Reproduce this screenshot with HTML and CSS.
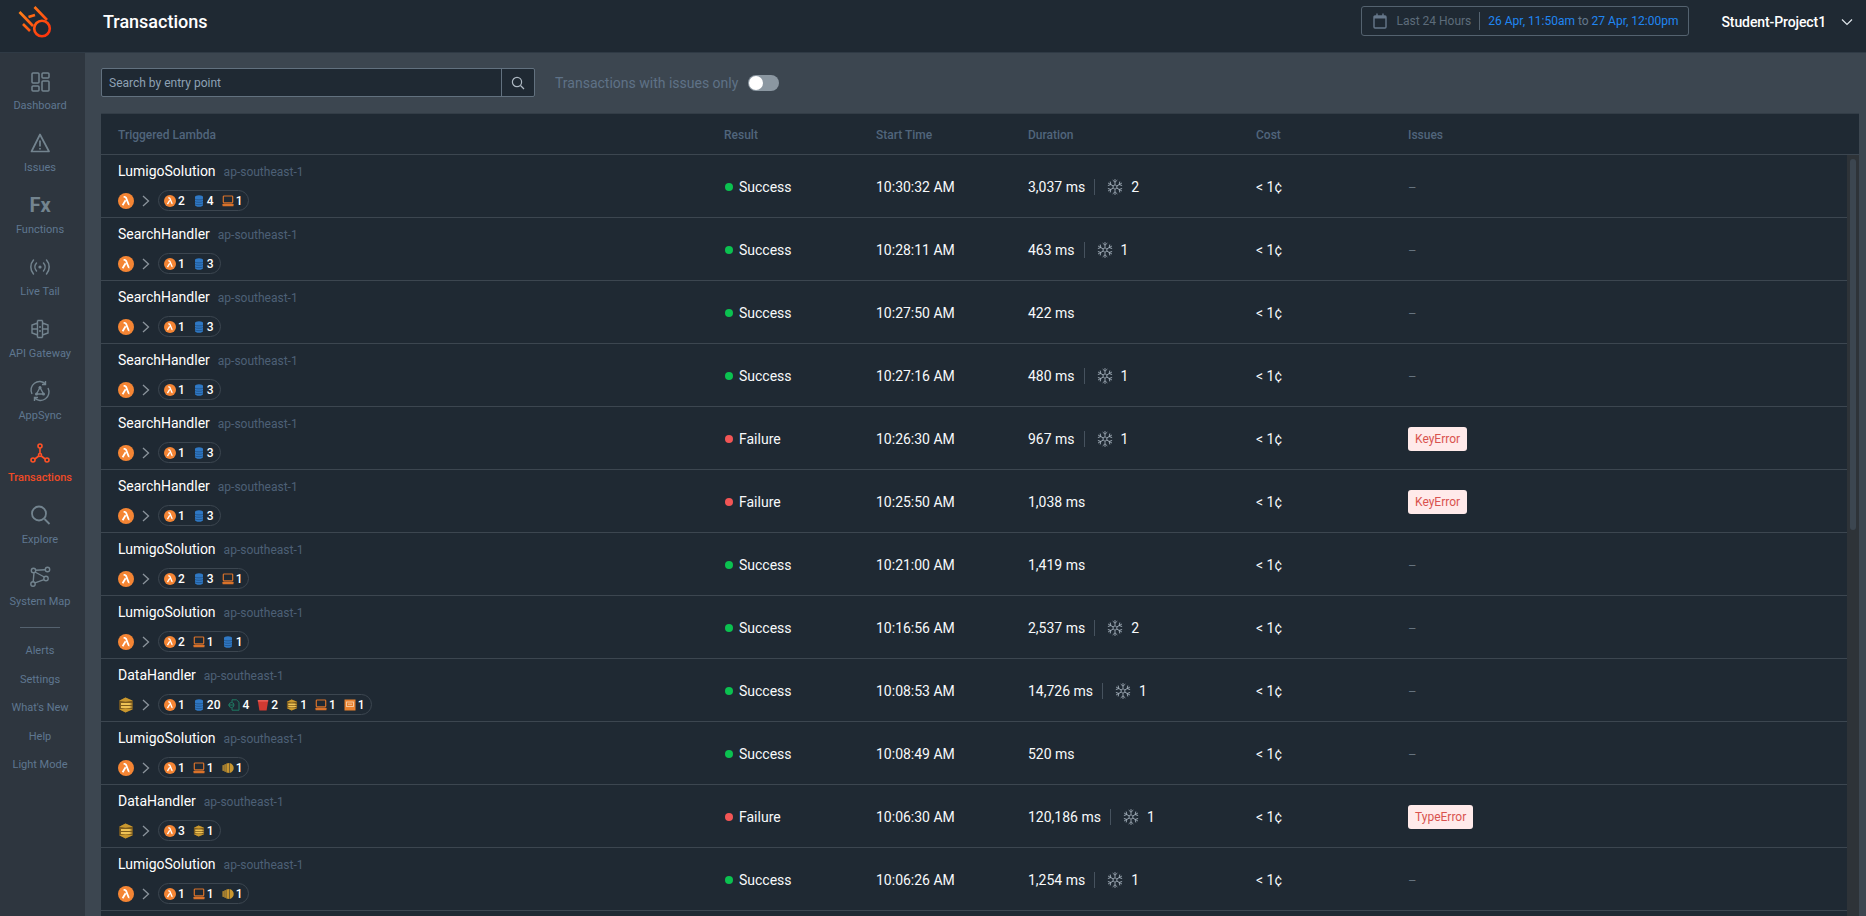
FILE: index.html
```html
<!DOCTYPE html>
<html lang="en">
<head>
<meta charset="utf-8">
<title>Transactions</title>
<link rel="stylesheet" href="styles.css">
</head>
<body>
<svg class="defs" width="0" height="0" aria-hidden="true">
  <defs>
    <linearGradient id="comet" gradientUnits="userSpaceOnUse" x1="19" y1="7" x2="50" y2="38">
      <stop offset="0" stop-color="#ff8a1a"/>
      <stop offset="1" stop-color="#ff2a0a"/>
    </linearGradient>
    <symbol id="i-lambda" viewBox="0 0 16 16">
      <circle cx="8" cy="8" r="8" fill="#f58534"/>
      <path d="M4.600 12.200 7.600 7.200M5.600 3.800h1c.8 0 1.200.4 1.500 1.100l2.300 5.800c.2.6.5.8 1 .8" fill="none" stroke="#fff" stroke-width="1.800"/>
    </symbol>
    <symbol id="i-db" viewBox="0 0 12 12">
      <path d="M2 2C2 .9 3.800.2 6 .2s4 .7 4 1.800v8c0 1.100-1.800 1.800-4 1.800s-4-.7-4-1.800z" fill="#2f78c4"/>
      <path d="M2 4.200c1.400.9 6.600.9 8 0M2 6.600c1.400.9 6.600.9 8 0M2 9c1.400.9 6.600.9 8 0" fill="none" stroke="#1d4a7c" stroke-width=".7"/>
    </symbol>
    <symbol id="i-pc" viewBox="0 0 12 12">
      <rect x="1.300" y="1" width="9.400" height="6.800" rx=".8" fill="none" stroke="#d9722a" stroke-width="1.200"/>
      <rect x=".5" y="8.800" width="11" height="2.400" rx=".5" fill="#d9722a"/>
    </symbol>
    <symbol id="i-box" viewBox="0 0 16 16">
      <path d="M7.500.6 14.800 3.800v8.400L7.500 15.400 1.200 12.200V3.800z" fill="#7d5c1e"/>
      <path d="M1.200 3.800 7.500.6l7.300 3.200-7.300 1z" fill="#c9982f"/>
      <path d="M1.200 12.200 7.500 15.400l7.300-3.200-7.300-1z" fill="#c9982f"/>
      <path d="M3 6h8.500l3.300 1-3.300 1H3zM3 8.900h8.500l3.300 1-3.300 1H3z" fill="#efc355"/>
    </symbol>
    <symbol id="i-gold" viewBox="0 0 12 12">
      <path d="M.5 3.300 1.800 3v6l-1.300-.3zM2.300 2.500 3.800 2v8l-1.500-.5zM4.300 1.600 7.300 1v10l-3-.6zM7.800 1c2.500.7 3.900 2.700 3.900 5s-1.400 4.300-3.900 5z" fill="#c9962f"/>
    </symbol>
    <symbol id="i-doc" viewBox="0 0 12 12">
      <path d="M4 3V.8h4.500L11 3.200v8H4V9" fill="none" stroke="#1e7a63" stroke-width="1"/>
      <circle cx="3.500" cy="6" r="2.500" fill="none" stroke="#1e7a63" stroke-width="1"/>
      <path d="M.2 6h5.600" stroke="#1e7a63" stroke-width="1"/>
    </symbol>
    <symbol id="i-bucket" viewBox="0 0 12 12">
      <path d="M.8 1.500h10.400L9.600 11.500H2.400z" fill="#d13a32"/>
      <path d="M.8 1.800h10.400" stroke="#f0635a" stroke-width="1.400"/>
    </symbol>
    <symbol id="i-square" viewBox="0 0 12 12">
      <rect x=".5" y=".5" width="11" height="11" fill="#e8812f"/>
      <rect x="2.500" y="3" width="7" height="4.500" fill="none" stroke="#f8cfa8" stroke-width=".9"/>
      <path d="M4 5.200h4" stroke="#f8cfa8" stroke-width=".9"/>
    </symbol>
    <g id="flake-arm" fill="none" stroke="#a3afba" stroke-width=".8">
      <path d="M8 5.800V0M5.700 1.100 8 3.200l2.300-2.100"/>
      <path d="M8 5.800 9.900 6.900"/>
    </g>
    <symbol id="i-flake" viewBox="0 0 16 16">
      <use href="#flake-arm"/>
      <use href="#flake-arm" transform="rotate(60 8 8)"/>
      <use href="#flake-arm" transform="rotate(120 8 8)"/>
      <use href="#flake-arm" transform="rotate(180 8 8)"/>
      <use href="#flake-arm" transform="rotate(240 8 8)"/>
      <use href="#flake-arm" transform="rotate(300 8 8)"/>
    </symbol>
    <symbol id="i-chev" viewBox="0 0 8 12">
      <path d="M1 1l5.500 5L1 11" fill="none" stroke="#8b949c" stroke-width="1.300"/>
    </symbol>
  </defs>
</svg>

<header class="topbar">
  <svg class="logo" viewBox="0 0 70 50" width="70" height="50" aria-label="Lumigo">
    <g fill="none" stroke="url(#comet)" stroke-width="2.600">
      <circle cx="42" cy="28.500" r="7.800"/>
      <path d="M19.500 12 33 26M34.500 7 47 20M23 24l7 7M28.500 17l6.500-2"/>
    </g>
  </svg>
  <h1 class="title">Transactions</h1>
  <div class="date-box">
    <svg class="cal" viewBox="0 0 14 16" width="14" height="16">
      <rect x="1" y="3" width="12" height="12" rx="1" fill="none" stroke="#66778a" stroke-width="1.400"/>
      <path d="M1 5.500h12V3H1z" fill="#66778a"/>
      <path d="M4 .5v3M10 .5v3" stroke="#66778a" stroke-width="1.400"/>
    </svg>
    <span class="range-name">Last 24 Hours</span>
    <span class="range-sep"></span>
    <span class="range"><b>26 Apr, 11:50am</b> to <b>27 Apr, 12:00pm</b></span>
  </div>
  <div class="project">Student-Project1</div>
  <svg class="caret" viewBox="0 0 12 8" width="12" height="8">
    <path d="M1 1.500 6 6.500l5-5" fill="none" stroke="#dfe5ea" stroke-width="1.200"/>
  </svg>
</header>

<div class="shell">
  <nav class="sidebar">
    <a class="nav-item">
      <svg class="nav-icon" viewBox="0 0 26 26"><g fill="none" stroke="#73848f" stroke-width="1.500"><rect x="5" y="5" width="7" height="10" rx="1"/><rect x="15" y="5" width="7" height="5" rx="1"/><rect x="5" y="18" width="7" height="5" rx="1"/><rect x="15" y="13" width="7" height="10" rx="1"/></g></svg>
      <span>Dashboard</span>
    </a>
    <a class="nav-item">
      <svg class="nav-icon" viewBox="0 0 26 26"><path d="M13 4.500 22 21.500H4.500z" fill="none" stroke="#73848f" stroke-width="1.700" stroke-linejoin="round"/><path d="M13 10.500v6M13 18v1.500" stroke="#73848f" stroke-width="1.700"/></svg>
      <span>Issues</span>
    </a>
    <a class="nav-item">
      <span class="fx">Fx</span>
      <span>Functions</span>
    </a>
    <a class="nav-item">
      <svg class="nav-icon" viewBox="0 0 26 26"><g fill="none" stroke="#73848f" stroke-width="1.500" stroke-linecap="round"><path d="M9.500 9a6 6 0 0 0 0 8M16.500 9a6 6 0 0 1 0 8M6.500 6a10.500 10.500 0 0 0 0 14M19.500 6a10.500 10.500 0 0 1 0 14"/></g><circle cx="13" cy="13" r="1.600" fill="#73848f"/></svg>
      <span>Live Tail</span>
    </a>
    <a class="nav-item">
      <svg class="nav-icon" viewBox="0 0 26 26"><g fill="none" stroke="#73848f" stroke-width="1.400"><path d="M10.500 4.500v17M15.500 4.500v17M10.500 7 5 9v8l5.500 2M15.500 7 21 9v8l-5.500 2M5 13h5.500M15.500 13H21M10.500 4.500h5M10.500 21.500h5M12 11h2M12 15h2"/></g></svg>
      <span>API Gateway</span>
    </a>
    <a class="nav-item">
      <svg class="nav-icon" viewBox="0 0 26 26"><g fill="none" stroke="#73848f" stroke-width="1.400"><path d="M5 16a8.500 8.500 0 0 1 13.500-10M21 10a8.500 8.500 0 0 1-13.500 10M18.500 3v3.500H15M7.500 23v-3.500H11"/><path d="M13 9.500 9.500 16h7z"/></g><circle cx="13" cy="9.500" r="1.500" fill="#73848f"/><circle cx="9.500" cy="16" r="1.500" fill="#73848f"/><circle cx="16.500" cy="16" r="1.500" fill="#73848f"/></svg>
      <span>AppSync</span>
    </a>
    <a class="nav-item active">
      <svg class="nav-icon" viewBox="0 0 26 26"><g fill="none" stroke="#ff5126" stroke-width="1.600"><circle cx="13" cy="6" r="2"/><circle cx="6" cy="20" r="2"/><circle cx="20" cy="20" r="2"/><circle cx="13" cy="15" r="1.500"/><path d="M13 8v5.500M11.800 16 7.800 19M14.200 16l4 3"/></g></svg>
      <span>Transactions</span>
    </a>
    <a class="nav-item">
      <svg class="nav-icon" viewBox="0 0 26 26"><circle cx="12" cy="11.500" r="7" fill="none" stroke="#73848f" stroke-width="1.800"/><path d="M17.500 17 22.500 22" stroke="#73848f" stroke-width="1.800"/></svg>
      <span>Explore</span>
    </a>
    <a class="nav-item">
      <svg class="nav-icon" viewBox="0 0 26 26"><g fill="none" stroke="#73848f" stroke-width="1.400"><circle cx="6.500" cy="6.500" r="2.200"/><circle cx="20.500" cy="5.500" r="2.200"/><circle cx="6" cy="20" r="2.200"/><circle cx="19" cy="14.500" r="2.200"/><path d="M8.700 6.300 18.300 5.700M7 8.600 6.200 17.800M8 8 17.300 13M8 18.900 17 15.700"/></g></svg>
      <span>System Map</span>
    </a>
    <div class="nav-rule"></div>
    <a class="nav-link">Alerts</a>
    <a class="nav-link">Settings</a>
    <a class="nav-link">What's New</a>
    <a class="nav-link">Help</a>
    <a class="nav-link">Light Mode</a>
  </nav>

  <main class="content">
    <div class="toolbar">
      <div class="search">
        <span class="search-text">Search by entry point</span>
        <span class="search-btn">
          <svg viewBox="0 0 14 14" width="14" height="14"><circle cx="6" cy="6" r="4.600" fill="none" stroke="#aeb9c3" stroke-width="1.200"/><path d="M9.500 9.500 13 13" stroke="#aeb9c3" stroke-width="1.200"/></svg>
        </span>
      </div>
      <span class="issues-label">Transactions with issues only</span>
      <span class="toggle"><span class="knob"></span></span>
    </div>

    <section class="table">
      <div class="cols head">
        <div>Triggered Lambda</div><div>Result</div><div>Start Time</div><div>Duration</div><div>Cost</div><div>Issues</div>
      </div>
      <div class="table-body">
        <div class="rows">

          <div class="cols row">
            <div class="cell-main">
              <div class="name-line"><span class="name">LumigoSolution</span><span class="region">ap-southeast-1</span></div>
              <div class="flow">
                <svg class="trigger"><use href="#i-lambda"/></svg><svg class="chev"><use href="#i-chev"/></svg>
                <div class="pill">
                  <span class="svc"><svg class="mini"><use href="#i-lambda"/></svg>2</span>
                  <span class="svc"><svg class="mini"><use href="#i-db"/></svg>4</span>
                  <span class="svc"><svg class="mini"><use href="#i-pc"/></svg>1</span>
                </div>
              </div>
            </div>
            <div class="result"><i class="dot ok"></i>Success</div>
            <div>10:30:32 AM</div>
            <div class="dur">3,037 ms<i class="sep"></i><svg class="flake"><use href="#i-flake"/></svg><span class="cold">2</span></div>
            <div>&lt; 1¢</div>
            <div class="dash">–</div>
          </div>

          <div class="cols row">
            <div class="cell-main">
              <div class="name-line"><span class="name">SearchHandler</span><span class="region">ap-southeast-1</span></div>
              <div class="flow">
                <svg class="trigger"><use href="#i-lambda"/></svg><svg class="chev"><use href="#i-chev"/></svg>
                <div class="pill">
                  <span class="svc"><svg class="mini"><use href="#i-lambda"/></svg>1</span>
                  <span class="svc"><svg class="mini"><use href="#i-db"/></svg>3</span>
                </div>
              </div>
            </div>
            <div class="result"><i class="dot ok"></i>Success</div>
            <div>10:28:11 AM</div>
            <div class="dur">463 ms<i class="sep"></i><svg class="flake"><use href="#i-flake"/></svg><span class="cold">1</span></div>
            <div>&lt; 1¢</div>
            <div class="dash">–</div>
          </div>

          <div class="cols row">
            <div class="cell-main">
              <div class="name-line"><span class="name">SearchHandler</span><span class="region">ap-southeast-1</span></div>
              <div class="flow">
                <svg class="trigger"><use href="#i-lambda"/></svg><svg class="chev"><use href="#i-chev"/></svg>
                <div class="pill">
                  <span class="svc"><svg class="mini"><use href="#i-lambda"/></svg>1</span>
                  <span class="svc"><svg class="mini"><use href="#i-db"/></svg>3</span>
                </div>
              </div>
            </div>
            <div class="result"><i class="dot ok"></i>Success</div>
            <div>10:27:50 AM</div>
            <div class="dur">422 ms</div>
            <div>&lt; 1¢</div>
            <div class="dash">–</div>
          </div>

          <div class="cols row">
            <div class="cell-main">
              <div class="name-line"><span class="name">SearchHandler</span><span class="region">ap-southeast-1</span></div>
              <div class="flow">
                <svg class="trigger"><use href="#i-lambda"/></svg><svg class="chev"><use href="#i-chev"/></svg>
                <div class="pill">
                  <span class="svc"><svg class="mini"><use href="#i-lambda"/></svg>1</span>
                  <span class="svc"><svg class="mini"><use href="#i-db"/></svg>3</span>
                </div>
              </div>
            </div>
            <div class="result"><i class="dot ok"></i>Success</div>
            <div>10:27:16 AM</div>
            <div class="dur">480 ms<i class="sep"></i><svg class="flake"><use href="#i-flake"/></svg><span class="cold">1</span></div>
            <div>&lt; 1¢</div>
            <div class="dash">–</div>
          </div>

          <div class="cols row">
            <div class="cell-main">
              <div class="name-line"><span class="name">SearchHandler</span><span class="region">ap-southeast-1</span></div>
              <div class="flow">
                <svg class="trigger"><use href="#i-lambda"/></svg><svg class="chev"><use href="#i-chev"/></svg>
                <div class="pill">
                  <span class="svc"><svg class="mini"><use href="#i-lambda"/></svg>1</span>
                  <span class="svc"><svg class="mini"><use href="#i-db"/></svg>3</span>
                </div>
              </div>
            </div>
            <div class="result"><i class="dot bad"></i>Failure</div>
            <div>10:26:30 AM</div>
            <div class="dur">967 ms<i class="sep"></i><svg class="flake"><use href="#i-flake"/></svg><span class="cold">1</span></div>
            <div>&lt; 1¢</div>
            <div><span class="err">KeyError</span></div>
          </div>

          <div class="cols row">
            <div class="cell-main">
              <div class="name-line"><span class="name">SearchHandler</span><span class="region">ap-southeast-1</span></div>
              <div class="flow">
                <svg class="trigger"><use href="#i-lambda"/></svg><svg class="chev"><use href="#i-chev"/></svg>
                <div class="pill">
                  <span class="svc"><svg class="mini"><use href="#i-lambda"/></svg>1</span>
                  <span class="svc"><svg class="mini"><use href="#i-db"/></svg>3</span>
                </div>
              </div>
            </div>
            <div class="result"><i class="dot bad"></i>Failure</div>
            <div>10:25:50 AM</div>
            <div class="dur">1,038 ms</div>
            <div>&lt; 1¢</div>
            <div><span class="err">KeyError</span></div>
          </div>

          <div class="cols row">
            <div class="cell-main">
              <div class="name-line"><span class="name">LumigoSolution</span><span class="region">ap-southeast-1</span></div>
              <div class="flow">
                <svg class="trigger"><use href="#i-lambda"/></svg><svg class="chev"><use href="#i-chev"/></svg>
                <div class="pill">
                  <span class="svc"><svg class="mini"><use href="#i-lambda"/></svg>2</span>
                  <span class="svc"><svg class="mini"><use href="#i-db"/></svg>3</span>
                  <span class="svc"><svg class="mini"><use href="#i-pc"/></svg>1</span>
                </div>
              </div>
            </div>
            <div class="result"><i class="dot ok"></i>Success</div>
            <div>10:21:00 AM</div>
            <div class="dur">1,419 ms</div>
            <div>&lt; 1¢</div>
            <div class="dash">–</div>
          </div>

          <div class="cols row">
            <div class="cell-main">
              <div class="name-line"><span class="name">LumigoSolution</span><span class="region">ap-southeast-1</span></div>
              <div class="flow">
                <svg class="trigger"><use href="#i-lambda"/></svg><svg class="chev"><use href="#i-chev"/></svg>
                <div class="pill">
                  <span class="svc"><svg class="mini"><use href="#i-lambda"/></svg>2</span>
                  <span class="svc"><svg class="mini"><use href="#i-pc"/></svg>1</span>
                  <span class="svc"><svg class="mini"><use href="#i-db"/></svg>1</span>
                </div>
              </div>
            </div>
            <div class="result"><i class="dot ok"></i>Success</div>
            <div>10:16:56 AM</div>
            <div class="dur">2,537 ms<i class="sep"></i><svg class="flake"><use href="#i-flake"/></svg><span class="cold">2</span></div>
            <div>&lt; 1¢</div>
            <div class="dash">–</div>
          </div>

          <div class="cols row">
            <div class="cell-main">
              <div class="name-line"><span class="name">DataHandler</span><span class="region">ap-southeast-1</span></div>
              <div class="flow">
                <svg class="trigger"><use href="#i-box"/></svg><svg class="chev"><use href="#i-chev"/></svg>
                <div class="pill">
                  <span class="svc"><svg class="mini"><use href="#i-lambda"/></svg>1</span>
                  <span class="svc"><svg class="mini"><use href="#i-db"/></svg>20</span>
                  <span class="svc"><svg class="mini"><use href="#i-doc"/></svg>4</span>
                  <span class="svc"><svg class="mini"><use href="#i-bucket"/></svg>2</span>
                  <span class="svc"><svg class="mini"><use href="#i-box"/></svg>1</span>
                  <span class="svc"><svg class="mini"><use href="#i-pc"/></svg>1</span>
                  <span class="svc"><svg class="mini"><use href="#i-square"/></svg>1</span>
                </div>
              </div>
            </div>
            <div class="result"><i class="dot ok"></i>Success</div>
            <div>10:08:53 AM</div>
            <div class="dur">14,726 ms<i class="sep"></i><svg class="flake"><use href="#i-flake"/></svg><span class="cold">1</span></div>
            <div>&lt; 1¢</div>
            <div class="dash">–</div>
          </div>

          <div class="cols row">
            <div class="cell-main">
              <div class="name-line"><span class="name">LumigoSolution</span><span class="region">ap-southeast-1</span></div>
              <div class="flow">
                <svg class="trigger"><use href="#i-lambda"/></svg><svg class="chev"><use href="#i-chev"/></svg>
                <div class="pill">
                  <span class="svc"><svg class="mini"><use href="#i-lambda"/></svg>1</span>
                  <span class="svc"><svg class="mini"><use href="#i-pc"/></svg>1</span>
                  <span class="svc"><svg class="mini"><use href="#i-gold"/></svg>1</span>
                </div>
              </div>
            </div>
            <div class="result"><i class="dot ok"></i>Success</div>
            <div>10:08:49 AM</div>
            <div class="dur">520 ms</div>
            <div>&lt; 1¢</div>
            <div class="dash">–</div>
          </div>

          <div class="cols row">
            <div class="cell-main">
              <div class="name-line"><span class="name">DataHandler</span><span class="region">ap-southeast-1</span></div>
              <div class="flow">
                <svg class="trigger"><use href="#i-box"/></svg><svg class="chev"><use href="#i-chev"/></svg>
                <div class="pill">
                  <span class="svc"><svg class="mini"><use href="#i-lambda"/></svg>3</span>
                  <span class="svc"><svg class="mini"><use href="#i-box"/></svg>1</span>
                </div>
              </div>
            </div>
            <div class="result"><i class="dot bad"></i>Failure</div>
            <div>10:06:30 AM</div>
            <div class="dur">120,186 ms<i class="sep"></i><svg class="flake"><use href="#i-flake"/></svg><span class="cold">1</span></div>
            <div>&lt; 1¢</div>
            <div><span class="err">TypeError</span></div>
          </div>

          <div class="cols row">
            <div class="cell-main">
              <div class="name-line"><span class="name">LumigoSolution</span><span class="region">ap-southeast-1</span></div>
              <div class="flow">
                <svg class="trigger"><use href="#i-lambda"/></svg><svg class="chev"><use href="#i-chev"/></svg>
                <div class="pill">
                  <span class="svc"><svg class="mini"><use href="#i-lambda"/></svg>1</span>
                  <span class="svc"><svg class="mini"><use href="#i-pc"/></svg>1</span>
                  <span class="svc"><svg class="mini"><use href="#i-gold"/></svg>1</span>
                </div>
              </div>
            </div>
            <div class="result"><i class="dot ok"></i>Success</div>
            <div>10:06:26 AM</div>
            <div class="dur">1,254 ms<i class="sep"></i><svg class="flake"><use href="#i-flake"/></svg><span class="cold">1</span></div>
            <div>&lt; 1¢</div>
            <div class="dash">–</div>
          </div>

        </div>
        <div class="scroll-track"><div class="scroll-thumb"></div></div>
      </div>
    </section>
  </main>
</div>
</body>
</html>
```
FILE: styles.css
```css
* { box-sizing: border-box; }
html, body { height: 100%; }
body {
  margin: 0;
  overflow: hidden;
  display: flex;
  flex-direction: column;
  background: #3c4650;
  color: #f7f9fb;
  font-family: Roboto, "Liberation Sans", sans-serif;
  font-size: 14px;
}
.defs { display: block; height: 0; }

/* top bar */
.topbar {
  flex: none;
  height: 53px;
  display: flex;
  align-items: center;
  background: #1f2933;
  border-bottom: 1px solid #2f3a45;
}
.logo { flex: none; margin-top: -2px; }
.title {
  margin: -8px 0 0 33px;
  font-size: 18px;
  font-weight: 500;
  color: #fff;
  line-height: 24px;
}
.date-box {
  margin-left: auto;
  margin-top: -10px;
  width: 328px;
  height: 30px;
  display: flex;
  align-items: center;
  padding-left: 11px;
  border: 1px solid #54626f;
  border-radius: 3px;
  font-size: 12px;
  white-space: nowrap;
}
.cal { flex: none; }
.range-name { margin-left: 9px; color: #5d6c7a; }
.range-sep { width: 1px; height: 18px; margin: 0 8px; background: #54626f; }
.range { color: #64788c; }
.range b { font-weight: 400; color: #1f86f2; }
.project {
  margin: -8px 0 0 32px;
  font-weight: 500;
  letter-spacing: -0.1px;
  color: #fff;
  line-height: 44px;
}
.caret { flex: none; margin: -8px 13px 0 15px; }

/* layout */
.shell { flex: 1; min-height: 0; display: flex; }

/* sidebar */
.sidebar {
  flex: none;
  width: 85px;
  background: #2e363f;
  padding: 15px 5px 0 0;
  display: flex;
  flex-direction: column;
  align-items: center;
  font-size: 11px;
  color: #5f7790;
}
.nav-item {
  width: 100%;
  height: 62px;
  display: flex;
  flex-direction: column;
  align-items: center;
}
.nav-item span:last-child { line-height: 16px; margin-top: 4px; }
.nav-icon { width: 26px; height: 26px; flex: none; }
.nav-item.active { color: #f04a25; font-weight: 500; }
.fx {
  height: 26px;
  line-height: 26px;
  font-size: 20px;
  font-weight: 700;
  color: #73848f;
}
.nav-rule {
  width: 40px;
  height: 1px;
  margin: 1px 0 9px;
  background: #55626f;
}
.nav-link { height: 28.5px; line-height: 28.5px; }

/* content */
.content {
  flex: 1;
  min-width: 0;
  display: flex;
  flex-direction: column;
  padding: 15px 7px 0 16px;
}
.toolbar {
  flex: none;
  height: 29px;
  display: flex;
  align-items: center;
}
.search {
  width: 434px;
  height: 29px;
  display: flex;
  background: #1f2933;
  border: 1px solid #62717f;
  border-radius: 2px;
}
.search-text { flex: 1; padding-left: 7px; font-size: 12px; line-height: 28px; color: #8ea1b4; }
.search-btn {
  flex: none;
  width: 33px;
  display: flex;
  align-items: center;
  justify-content: center;
  border-left: 1px solid #62717f;
}
.issues-label { margin-left: 20px; color: #5f7287; }
.toggle {
  width: 31px;
  height: 16px;
  margin-left: 10px;
  padding: 1px;
  border-radius: 8px;
  background: #8b97a1;
}
.knob { display: block; width: 14px; height: 14px; border-radius: 50%; background: #fff; }

/* table */
.table {
  flex: 1;
  min-height: 0;
  margin-top: 16px;
  display: flex;
  flex-direction: column;
  background: #1f2933;
  border-top: 1px solid #333d47;
}
.cols {
  display: grid;
  grid-template-columns: 606px 152px 152px 228px 152px 1fr;
  align-items: center;
  padding-left: 17px;
}
.head {
  flex: none;
  height: 41px;
  padding-top: 2px;
  font-size: 12px;
  font-weight: 500;
  color: #51657c;
  border-bottom: 1px solid #3c4650;
}
.table-body { flex: 1; min-height: 0; display: flex; }
.rows { flex: 1; min-width: 0; overflow: hidden; }
.row { height: 63px; padding-top: 2px; border-bottom: 1px solid #3c4650; }
.cell-main {
  align-self: start;
  display: flex;
  flex-direction: column;
  gap: 9px;
  padding-top: 4px;
}
.name-line { display: flex; align-items: baseline; height: 20px; line-height: 20px; }
.name { color: #fff; }
.region { margin-left: 8px; font-size: 12px; color: #4d6076; }
.flow { display: flex; align-items: center; height: 21px; }
.trigger { flex: none; width: 16px; height: 16px; }
.chev { flex: none; width: 8px; height: 12px; margin: 0 8px; }
.pill {
  display: flex;
  align-items: center;
  gap: 8px;
  height: 21px;
  padding: 0 6px 0 5px;
  border: 1px solid #3c4650;
  border-radius: 11px;
  font-size: 12px;
  font-weight: 500;
  color: #fff;
}
.svc { display: flex; align-items: center; gap: 2px; }
.mini { flex: none; width: 12px; height: 12px; }
.result { display: flex; align-items: center; }
.dot { width: 8px; height: 8px; margin: 0 6px 0 1px; border-radius: 50%; }
.dot.ok { background: #0bc150; }
.dot.bad { background: #f25555; }
.dur { display: flex; align-items: center; }
.sep { width: 1px; height: 16px; margin: 0 12px 0 9px; background: #46525e; }
.flake { flex: none; width: 16px; height: 16px; }
.cold { margin-left: 8px; }
.dash { font-size: 13px; color: #66737f; }
.err {
  display: inline-block;
  height: 24px;
  padding: 0 7px;
  line-height: 24px;
  font-size: 12px;
  color: #d9534f;
  background: #ffeaea;
  border-radius: 3px;
}
.scroll-track {
  flex: none;
  width: 12px;
  padding: 4px 3px 0;
  background: #2e3338;
}
.scroll-thumb { height: 371px; background: #3c4650; border-radius: 3px; }
```
